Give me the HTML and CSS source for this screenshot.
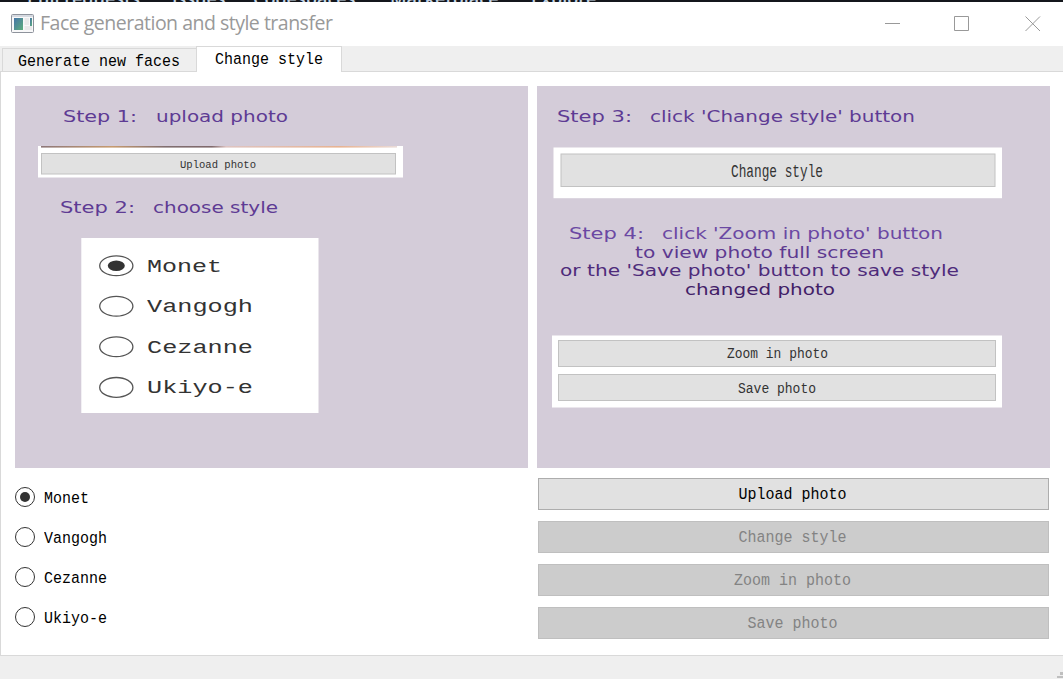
FILE: index.html
```html
<!DOCTYPE html>
<html lang="en">
<head>
<meta charset="utf-8">
<title>Face generation and style transfer</title>
<link rel="stylesheet" href="styles.css">
</head>
<body>
<div class="backdrop"><span class="b1">Pull requests</span><span class="b2">Issues</span><span class="b3">Codespaces</span><span class="b4">Marketplace</span><span>Explore</span></div>
<header class="titlebar">
  <svg class="appicon" width="23" height="19" viewBox="0 0 23 19">
    <defs><linearGradient id="ic" x1="0" y1="0" x2="1" y2="1"><stop offset="0" stop-color="#4674a8"/><stop offset="1" stop-color="#5dae7c"/></linearGradient></defs>
    <rect x=".5" y=".5" width="22" height="18" rx="1" fill="#f8f8f9" stroke="#8e939c"/>
    <rect x="1" y="1" width="21" height="2" fill="#d5d9e0"/>
    <rect x="3" y="4" width="9" height="12" fill="url(#ic)"/>
    <rect x="13.500" y="4" width="4.500" height="7" fill="#e9e9ea"/>
    <rect x="13.500" y="12" width="7.500" height="4" fill="#e9e9ea"/>
    <rect x="19" y="4" width="2" height="8" fill="url(#ic)"/>
  </svg>
  <h1 class="title">Face generation and style transfer</h1>
  <svg class="controls" width="156" height="16" viewBox="0 0 156 16" fill="none" stroke="#999">
    <path d="M0 7.500H15M69.500 .5h14v14h-14zM140.500 .5l14.500 14.500M155 .5L140.500 15"/>
  </svg>
</header>
<nav class="tabs">
  <div class="tab"><span class="mono">Generate new faces</span></div>
  <div class="tab active"><span class="mono">Change style</span></div>
</nav>
<main class="page">
  <svg class="guide" width="513" height="382" viewBox="15 86 513 382">
    <defs>
      <linearGradient id="edge"><stop offset="0" stop-color="#8d7779"/><stop offset=".2" stop-color="#c79b70"/><stop offset=".35" stop-color="#806e70"/><stop offset=".48" stop-color="#80696c"/><stop offset=".52" stop-color="#dec4c2"/><stop offset=".84" stop-color="#e8b392"/><stop offset="1" stop-color="#eadbd8"/></linearGradient>
    </defs>
    <g class="step">
      <text x="63" y="122" textLength="74" lengthAdjust="spacingAndGlyphs">Step 1:</text><text x="156" y="122" textLength="132" lengthAdjust="spacingAndGlyphs">upload photo</text>
      <text x="60" y="213" textLength="75" lengthAdjust="spacingAndGlyphs">Step 2:</text><text x="153" y="213" textLength="125" lengthAdjust="spacingAndGlyphs">choose style</text>
    </g>
    <rect x="38" y="146" width="365" height="31.500" fill="#fff"/>
    <rect x="41" y="146" width="356" height="1.600" fill="url(#edge)"/>
    <rect class="btnbox" x="41.500" y="153.500" width="354" height="20.500"/>
    <text class="pic" x="180" y="168" font-size="11.500" textLength="76" lengthAdjust="spacingAndGlyphs">Upload photo</text>
    <rect x="81.300" y="238" width="237.200" height="175" fill="#fff"/>
    <g class="ring">
      <ellipse cx="116.300" cy="265.700" rx="16.600" ry="9.900"/><ellipse cx="116.300" cy="306.200" rx="16.600" ry="9.900"/>
      <ellipse cx="116.300" cy="346.800" rx="16.600" ry="9.900"/><ellipse cx="116.300" cy="387.400" rx="16.600" ry="9.900"/>
    </g>
    <ellipse cx="116.300" cy="265.700" rx="8.500" ry="5.200" fill="#333"/>
    <g class="pic wide">
      <text x="147" y="271.500" textLength="75" lengthAdjust="spacingAndGlyphs">Monet</text>
      <text x="147" y="312.200" textLength="106" lengthAdjust="spacingAndGlyphs">Vangogh</text>
      <text x="147" y="352.800" textLength="106" lengthAdjust="spacingAndGlyphs">Cezanne</text>
      <text x="147" y="393.300" textLength="106" lengthAdjust="spacingAndGlyphs">Ukiyo-e</text>
    </g>
  </svg>
  <svg class="guide" width="513" height="382" viewBox="537 86 513 382">
    <g class="step">
      <text x="557" y="122" textLength="75" lengthAdjust="spacingAndGlyphs">Step 3:</text><text x="650" y="122" textLength="265" lengthAdjust="spacingAndGlyphs">click 'Change style' button</text>
      <text class="s1" x="569" y="239" textLength="75" lengthAdjust="spacingAndGlyphs">Step 4:</text><text class="s1" x="662" y="239" textLength="281" lengthAdjust="spacingAndGlyphs">click 'Zoom in photo' button</text>
      <text class="s2" x="635" y="257.500" textLength="249" lengthAdjust="spacingAndGlyphs">to view photo full screen</text>
      <text class="s3" x="560" y="276" textLength="399" lengthAdjust="spacingAndGlyphs">or the 'Save photo' button to save style</text>
      <text class="s4" x="685" y="294.500" textLength="150" lengthAdjust="spacingAndGlyphs">changed photo</text>
    </g>
    <rect x="553.500" y="147.500" width="448.500" height="50.700" fill="#fff"/>
    <rect class="btnbox" x="561" y="154" width="434" height="32.500"/>
    <text class="pic" x="731" y="177" font-size="18" textLength="92" lengthAdjust="spacingAndGlyphs">Change style</text>
    <rect x="552" y="335.500" width="450" height="72" fill="#fff"/>
    <rect class="btnbox" x="558.500" y="340.500" width="437" height="26"/>
    <rect class="btnbox" x="558.500" y="374.500" width="437" height="26"/>
    <text class="pic" x="727" y="358" font-size="14.500" textLength="101" lengthAdjust="spacingAndGlyphs">Zoom in photo</text>
    <text class="pic" x="738" y="393" font-size="14.500" textLength="78" lengthAdjust="spacingAndGlyphs">Save photo</text>
  </svg>
  <div class="radios">
    <label class="radio"><span class="dot on"></span><span class="mono">Monet</span></label>
    <label class="radio"><span class="dot"></span><span class="mono">Vangogh</span></label>
    <label class="radio"><span class="dot"></span><span class="mono">Cezanne</span></label>
    <label class="radio"><span class="dot"></span><span class="mono">Ukiyo-e</span></label>
  </div>
  <div class="buttons">
    <button class="btn"><span class="mono">Upload photo</span></button>
    <button class="btn" disabled><span class="mono">Change style</span></button>
    <button class="btn" disabled><span class="mono">Zoom in photo</span></button>
    <button class="btn" disabled><span class="mono">Save photo</span></button>
  </div>
</main>
<footer class="status"><svg width="6" height="9" viewBox="0 0 6 9" fill="#bfbfbf"><path d="M3 2h3v3H3zM0 6h6v2H0z"/></svg></footer>
</body>
</html>
```
FILE: styles.css
```css
* { box-sizing: border-box; }
body { margin: 0; width: 1063px; height: 679px; overflow: hidden; display: flex; flex-direction: column; background: #fff; }
.backdrop { height: 2px; flex: none; overflow: hidden; background: #14171c; color: #c3d4e4; display: flex; padding-left: 27px; gap: 25px; align-items: flex-end; font: 600 18px/8px "Open Sans", sans-serif; white-space: nowrap; }
.backdrop span { height: 8px; }
.backdrop .b1 { width: 120px; }
.backdrop .b2 { width: 56px; }
.backdrop .b3 { width: 112px; }
.backdrop .b4 { width: 116px; }
.titlebar { height: 44px; flex: none; display: flex; align-items: center; padding: 0 22px 0 11px; }
.appicon { margin-right: 6px; margin-bottom: 2px; }
.title { margin: 0; padding-bottom: 2px; font: 400 19.5px/26px "Open Sans", sans-serif; letter-spacing: -.5px; color: #999; flex: 1; white-space: nowrap; }
.tabs { height: 26px; flex: none; display: flex; align-items: flex-end; background: #efefef; border-bottom: 1px solid #d9d9d9; padding-left: 2px; }
.tab { width: 194px; height: 23px; border: 1px solid #d9d9d9; border-bottom: 0; border-right: 0; background: #efefef; display: flex; align-items: center; padding: 5px 0 0 15px; }
.tab.active { width: 146px; height: 26px; margin-bottom: -1px; border-right: 1px solid #d9d9d9; background: #fff; padding: 2px 0 0 18px; }
.mono { display: inline-block; font: 15px/20px "Liberation Mono", monospace; transform: scaleY(1.16); white-space: pre; }
.page { height: 584px; flex: none; border-left: 1px solid #d9d9d9; border-bottom: 1px solid #d9d9d9; padding: 14px 13px 0 14px; display: grid; grid-template-columns: 513px 513px; column-gap: 9px; grid-template-rows: 382px auto; row-gap: 10px; align-content: start; }
.guide { display: block; background: #d4ccd9; }
.step { font-family: "DejaVu Sans", sans-serif; font-size: 15.5px; fill: #5e3b94; }
.s1 { fill: #6b48a3; }
.s2 { fill: #5d3990; }
.s3 { fill: #4e2b7b; }
.s4 { fill: #422068; }
.btnbox { fill: #e1e1e1; stroke: #c2c2c2; }
.pic { font-family: "Liberation Mono", monospace; fill: #333; }
.wide { font-size: 18px; }
.ring { fill: none; stroke: #555; stroke-width: 1.3; }
.radios { display: flex; flex-direction: column; gap: 20px; padding-top: 9px; }
.radio { display: flex; align-items: center; gap: 9px; height: 20px; }
.radio .mono { padding-top: 3px; }
.dot { width: 20px; height: 20px; border: 1px solid #333; border-radius: 50%; display: grid; place-items: center; }
.dot.on::before { content: ""; width: 10px; height: 10px; border-radius: 50%; background: #333; }
.buttons { display: flex; flex-direction: column; gap: 11px; padding: 0 1px; }
.btn { height: 32px; border: 1px solid #adadad; background: #e1e1e1; color: #000; padding: 3px 2px 0 0; }
.btn:disabled { background: #ccc; border-color: #bfbfbf; color: #838383; }
.status { flex: 1; background: #efefef; display: flex; justify-content: flex-end; align-items: flex-end; }
```
